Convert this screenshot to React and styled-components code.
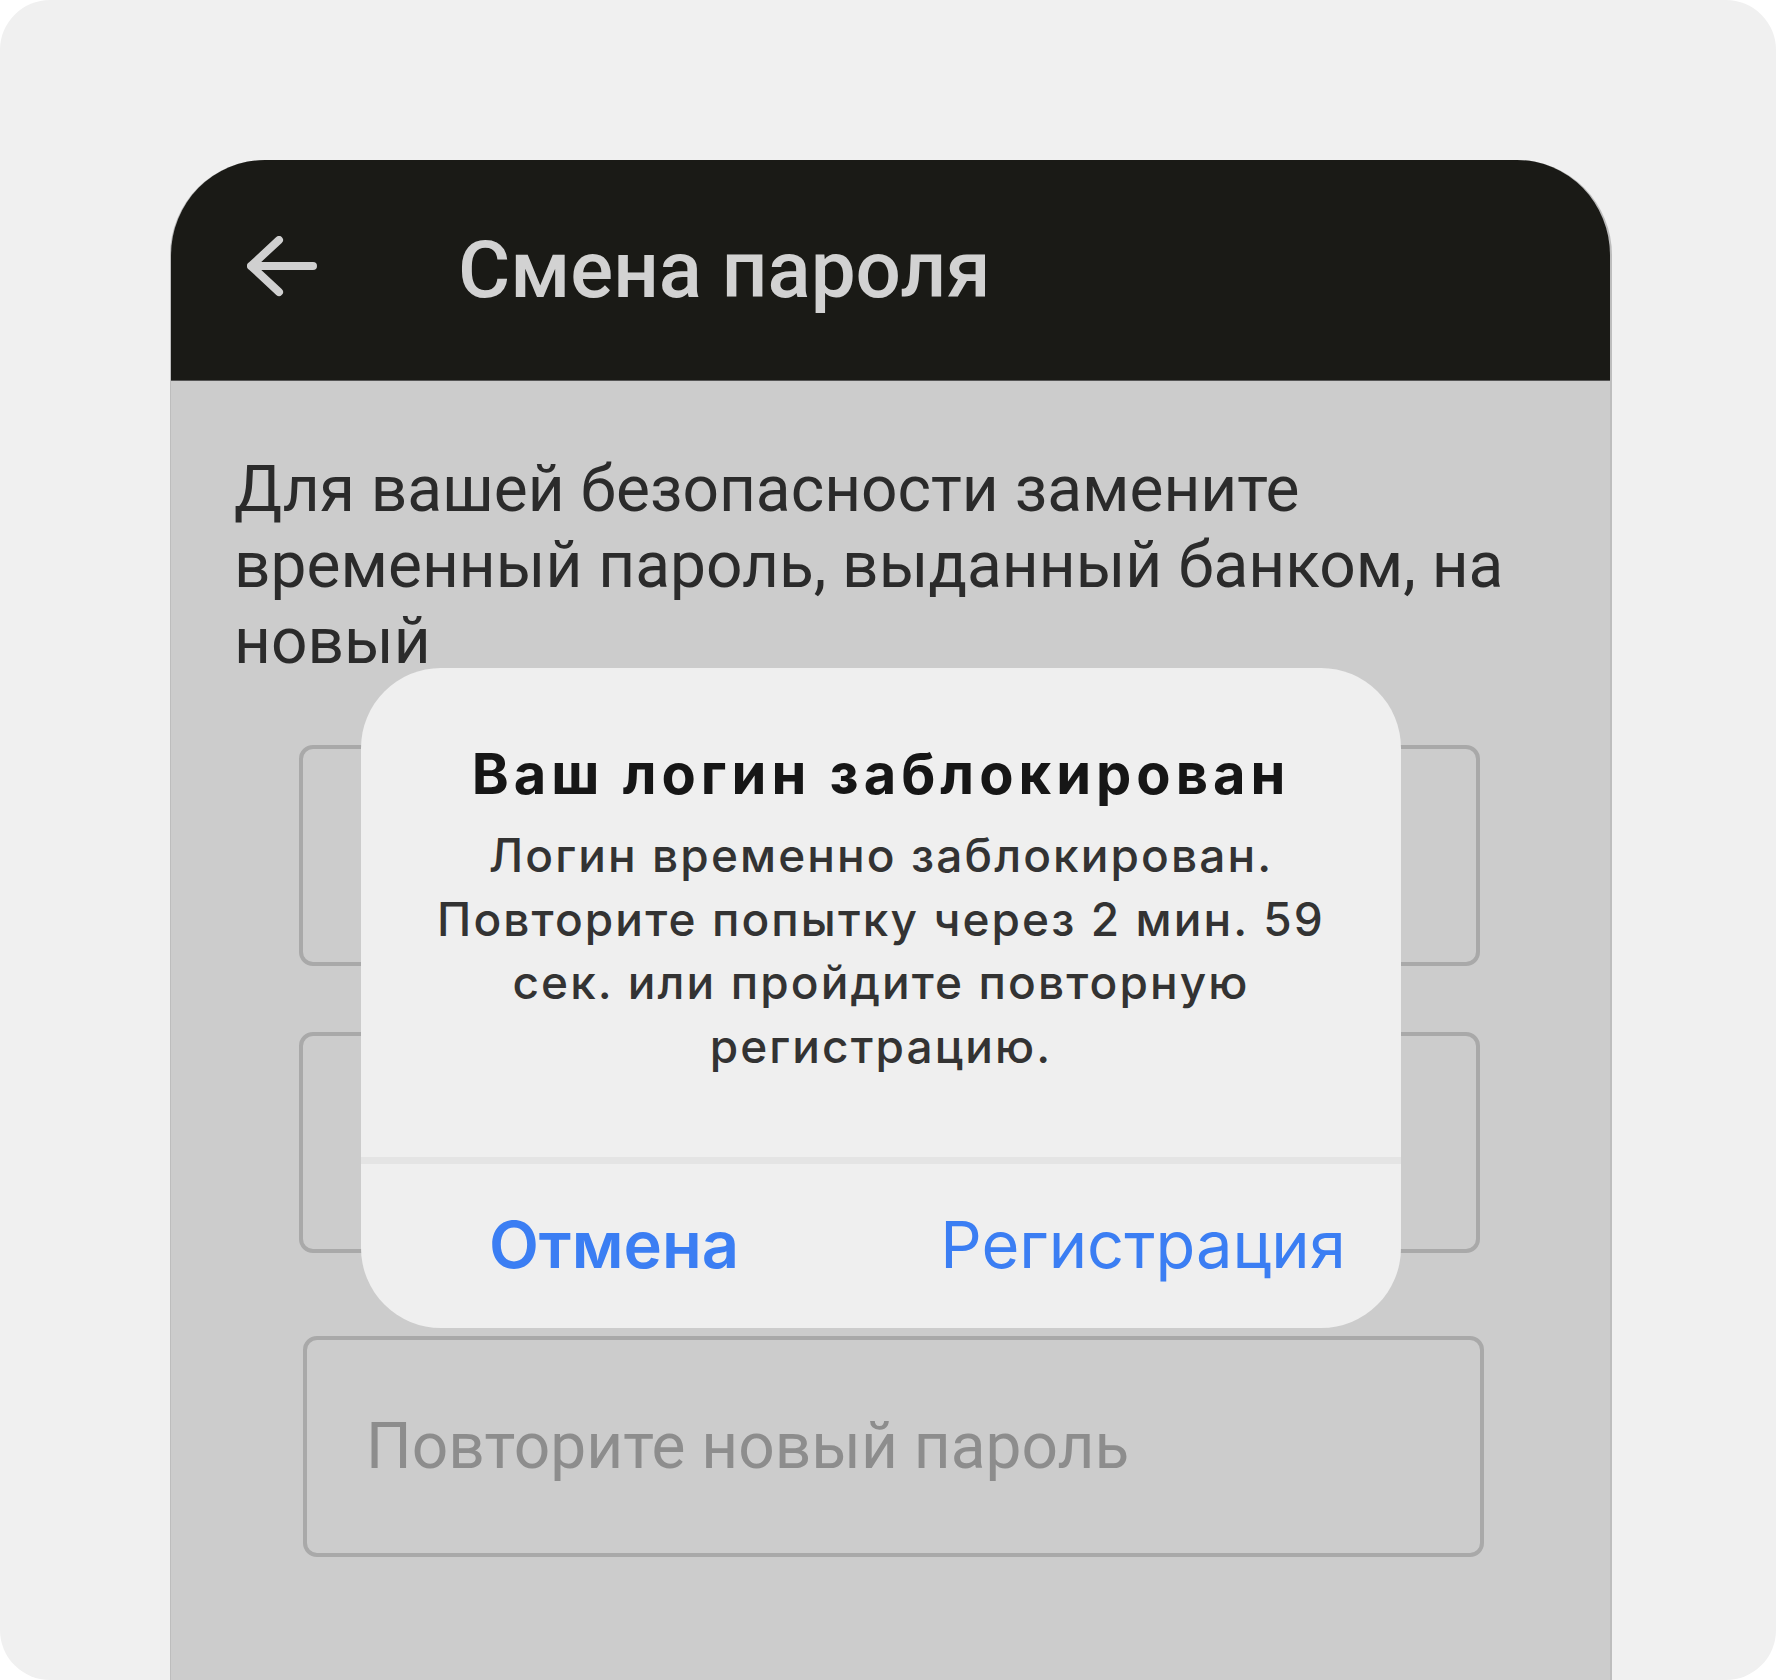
import React from "react";
import styled, { createGlobalStyle } from "styled-components";

const Global = createGlobalStyle`
  html, body { margin: 0; padding: 0; background: #ffffff; }
  * { box-sizing: border-box; }
`;

const Frame = styled.div`
  width: 1776px;
  height: 1680px;
  background: #f0f0f0;
  border-radius: 50px;
  overflow: hidden;
  padding: 160px 0 0 170px;
`;

const Phone = styled.div`
  position: relative;
  width: 1442px;
  height: 1520px;
  border-radius: 95px 95px 0 0;
  overflow: hidden;
  background: #cccccc;
  display: flex;
  flex-direction: column;
  border-right: 2px solid #bdbdbd;
  border-left: 1px solid #bdbdbd;
`;

const Header = styled.header`
  height: 221px;
  flex: none;
  background: #1a1a16;
  display: flex;
  align-items: center;
  padding-left: 76px;
  border-bottom: 1px solid #555;
`;

const BackIcon = styled.svg`
  width: 70px;
  height: 64px;
  flex: none;
  margin-top: -4px;
`;

const Title = styled.h1`
  margin: 0 0 0 141px;
  font-family: Roboto, "Noto Sans", sans-serif;
  font-weight: 500;
  font-size: 80px;
  line-height: 1;
  color: #d2d2d2;
`;

const Content = styled.main`
  padding: 71px 0 0 63px;
  display: flex;
  flex-direction: column;
`;

const Lead = styled.p`
  margin: 0;
  font-family: Roboto, "Noto Sans", sans-serif;
  font-weight: 400;
  font-size: 64px;
  line-height: 76px;
  color: #2b2b2b;
`;

const Fields = styled.div`
  margin: 65px 0 0 65px;
  display: flex;
  flex-direction: column;
`;

const Field = styled.div`
  width: 1181px;
  height: 221px;
  margin-top: ${(p) => p.$gap || 0}px;
  margin-left: ${(p) => p.$shift || 0}px;
  border: 4px solid #a9a9a9;
  border-radius: 14px;
  display: flex;
  align-items: center;
  padding-left: 59px;
  font-family: Roboto, "Noto Sans", sans-serif;
  font-size: 64px;
  color: #8d8d8d;
`;

const Dialog = styled.div`
  position: absolute;
  left: 190px;
  top: 508px;
  width: 1040px;
  height: 660px;
  border-radius: 80px;
  background: #efefef;
  display: flex;
  flex-direction: column;
  font-family: Inter, Roboto, "Noto Sans", sans-serif;
  text-align: center;
  overflow: hidden;
`;

const DialogTitle = styled.h2`
  margin: 75px 0 0;
  font-size: 56px;
  line-height: 62px;
  font-weight: 700;
  color: #161616;
  letter-spacing: 5px;
  white-space: nowrap;
`;

const DialogText = styled.p`
  margin: 19px 0 0;
  font-size: 46px;
  line-height: 63.5px;
  font-weight: 500;
  color: #333333;
  letter-spacing: 2.1px;
  white-space: nowrap;
`;

const Divider = styled.div`
  margin-top: auto;
  height: 7px;
  background: #e4e4e4;
`;

const Actions = styled.div`
  height: 164px;
  display: grid;
  grid-template-columns: 1fr 1fr;
  align-items: center;
`;

const ActionButton = styled.button`
  border: none;
  background: none;
  padding: 0;
  margin: -4px 0 0 ${(p) => p.$offset || 0}px;
  font-family: Inter, Roboto, "Noto Sans", sans-serif;
  font-size: 65px;
  font-weight: ${(p) => (p.$strong ? 600 : 400)};
  color: #3b7ef3;
  cursor: pointer;
`;

export default function App() {
  return (
    <>
      <Global />
      <Frame>
        <Phone>
          <Header>
            <BackIcon viewBox="0 0 70 64" aria-hidden="true">
              <path
                d="M66 30H4M4 30L32 4M4 30L32 56"
                fill="none"
                stroke="#d0d0d0"
                strokeWidth="8"
                strokeLinecap="round"
                strokeLinejoin="round"
              />
            </BackIcon>
            <Title>Смена пароля</Title>
          </Header>
          <Content>
            <Lead>
              Для вашей безопасности замените
              <br />
              временный пароль, выданный банком, на
              <br />
              новый
            </Lead>
            <Fields>
              <Field />
              <Field $gap={66} />
              <Field $gap={83} $shift={4}>Повторите новый пароль</Field>
            </Fields>
          </Content>
          <Dialog role="alertdialog">
            <DialogTitle>Ваш логин заблокирован</DialogTitle>
            <DialogText>
              Логин временно заблокирован.
              <br />
              Повторите попытку через 2 мин. 59
              <br />
              сек. или пройдите повторную
              <br />
              регистрацию.
            </DialogText>
            <Divider />
            <Actions>
              <ActionButton $strong $offset={-14}>Отмена</ActionButton>
              <ActionButton $offset={4}>Регистрация</ActionButton>
            </Actions>
          </Dialog>
        </Phone>
      </Frame>
    </>
  );
}
